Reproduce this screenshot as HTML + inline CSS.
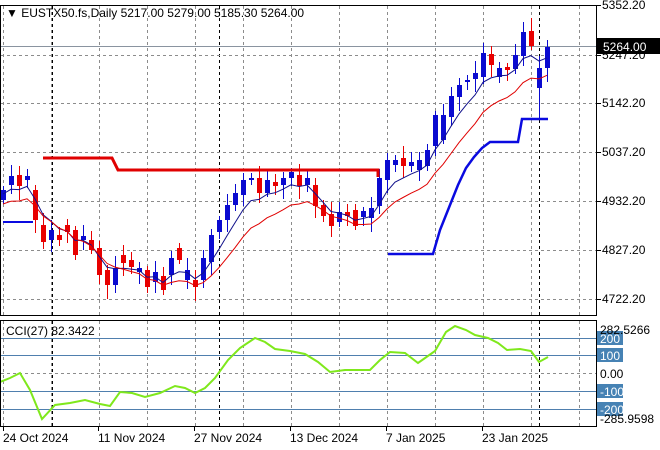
<!DOCTYPE html>
<html><head><meta charset="utf-8"><style>
body{margin:0;background:#fff;width:660px;height:450px;overflow:hidden}
svg{display:block;font-family:"Liberation Sans","DejaVu Sans",sans-serif;font-size:12px}
</style></head><body>
<svg id="s" width="660" height="450" xmlns="http://www.w3.org/2000/svg">
<rect width="660" height="450" fill="#fff"/>
<g id="grid"></g>
<g id="plot"></g>
<rect x="0.5" y="5.5" width="596" height="310" fill="none" stroke="#000"/>
<rect x="0.5" y="320.5" width="596" height="106" fill="none" stroke="#000"/>
<g id="axis"></g>
<text x="6" y="17" font-size="12">▼ EUSTX50.fs,Daily  5217.00 5279.00 5185.30 5264.00</text>
<text x="6" y="335" font-size="12">CCI(27) 82.3422</text>
</svg>
<script>
var NS="http://www.w3.org/2000/svg";
function el(p,t,a,txt){var e=document.createElementNS(NS,t);for(var k in a)e.setAttribute(k,a[k]);if(txt!=null)e.textContent=txt;document.getElementById(p).appendChild(e);return e;}
var G="grid";
[3,51,99,147,195,243,291,339,387,435,483,531,579].forEach(function(x){
 el(G,"line",{x1:x+.5,y1:6,x2:x+.5,y2:315,stroke:"#8c8c8c","stroke-dasharray":"3,3"});
 el(G,"line",{x1:x+.5,y1:321,x2:x+.5,y2:426,stroke:"#8c8c8c","stroke-dasharray":"3,3"});
});
[52,219,539].forEach(function(x){
 el(G,"line",{x1:x+.5,y1:6,x2:x+.5,y2:315,stroke:"#000","stroke-dasharray":"3,3"});
 el(G,"line",{x1:x+.5,y1:321,x2:x+.5,y2:426,stroke:"#000","stroke-dasharray":"3,3"});
});
[55,103,152,201,250,299].forEach(function(y){el(G,"line",{x1:1,y1:y+.5,x2:596,y2:y+.5,stroke:"#8c8c8c","stroke-dasharray":"3,3"});});
el(G,"line",{x1:1,y1:46.5,x2:596,y2:46.5,stroke:"#8a94a0"});
[338,355,391,409].forEach(function(y){el(G,"line",{x1:1,y1:y+.5,x2:596,y2:y+.5,stroke:"#4f7fae"});});
el(G,"line",{x1:1,y1:373.5,x2:596,y2:373.5,stroke:"#8c8c8c","stroke-dasharray":"3,3"});
// candles [open,close] in y
var oc=[[200,190],[185,176],[175,186],[180,176],[190,220],[225,242],[240,230],[235,240],[225,232],[230,255],[240,236],[240,250],[248,275],[270,285],[285,268],[255,263],[260,267],[272,268],[270,287],[282,272],[276,290],[275,258],[248,260],[280,270],[280,287],[280,258],[262,235],[232,220],[220,205],[205,193],[195,180],[180,178],[178,193],[193,180],[182,186],[185,178],[178,172],[175,186],[185,178],[185,206],[205,216],[214,226],[222,212],[212,216],[210,226],[217,211],[218,208],[206,178],[180,160],[165,160],[158,166],[166,162],[170,160],[166,150],[146,115],[140,115],[117,96],[97,85],[82,80],[79,73],[77,53],[54,65],[77,68],[67,70],[69,55],[56,32],[31,46],[88,68],[68,47]];
var P="plot";
var closes=[];
oc.forEach(function(c,i){
 var x=3+8*i,o=c[0],cl=c[1],up=cl<o,col=up?"#0a0ad0":"#e80000";
 var t=Math.min(o,cl),b=Math.max(o,cl);
 var hi=t-4-((i*7)%9),lo=b+4+((i*5)%11);
 if(i==67){lo=118;hi=56}if(i==65)hi=22;if(i==66)hi=18;if(i==68)hi=40;
 el(P,"line",{x1:x+.5,y1:hi,x2:x+.5,y2:lo,stroke:col});
 el(P,"rect",{x:x-2,y:t,width:5,height:Math.max(b-t,1.5),fill:col});
 closes.push(cl);
});
function ema(a,n,off){var k=2/(n+1),v=a[0],r=[];a.forEach(function(z){v=v+k*(z-v);r.push(v+off)});return r;}
var b=ema(closes,5,4),r=ema(closes,9,14);
function pl(arr,col,w){var s=arr.map(function(y,i){return (3+8*i)+","+y.toFixed(1)}).join(" ");el(P,"polyline",{points:s,fill:"none",stroke:col,"stroke-width":w});}
pl(b,"#10108a",1);pl(r,"#e00000",1);
el(P,"polyline",{points:"43,158 112,158 118,170 378,170 378,177",fill:"none",stroke:"#e00000","stroke-width":3});
el(P,"polyline",{points:"388,254 433,254 440,230 450,205 458,185 466,168 474,157 482,148 490,142 518,142 522,119 548,119",fill:"none",stroke:"#0a0ae0","stroke-width":2.5});
el(P,"polyline",{points:"3,222 33,222",fill:"none",stroke:"#0a0ae0","stroke-width":2});
el(P,"polyline",{points:"0,382 10,378 20,373 30,390 42,419 55,405 70,403 85,400 100,404 110,406 120,392 132,393 145,397 160,393 175,386 185,388 195,393 205,388 215,378 228,360 240,348 255,338 265,342 275,349 290,351 305,354 318,362 330,372 345,370 370,370 380,360 390,352 405,353 418,363 435,351 446,332 455,326 466,330 475,335 488,338 498,343 507,350 520,349 531,351 539,362 548,357",fill:"none",stroke:"#7fe81c","stroke-width":2});
var A="axis";
[[5352.2,5],[5247.2,55],[5142.2,103],[5037.2,152],[4932.2,201],[4827.2,250],[4722.2,299]].forEach(function(v){
 el(A,"line",{x1:597,y1:v[1]+.5,x2:601,y2:v[1]+.5,stroke:"#000"});
 el(A,"text",{x:602,y:v[1]+4},v[0].toFixed(2));});
el(A,"rect",{x:597,y:38,width:63,height:16,fill:"#000"});
el(A,"text",{x:603,y:51,fill:"#fff"},"5264.00");
[["200",338],["100",355],["-100",391],["-200",409]].forEach(function(v){
 el(A,"rect",{x:597,y:v[1]-7,width:26,height:14,fill:"#4682b4"});
 el(A,"text",{x:600,y:v[1]+5,fill:"#fff"},v[0]);});
el(A,"text",{x:600,y:334},"282.5266");
el(A,"text",{x:600,y:378},"0.00");
el(A,"text",{x:600,y:423},"-285.9598");
[["24 Oct 2024",3],["11 Nov 2024",98],["27 Nov 2024",194],["13 Dec 2024",290],["7 Jan 2025",386],["23 Jan 2025",482]].forEach(function(v){
 el(A,"line",{x1:v[1]+.5,y1:427,x2:v[1]+.5,y2:431,stroke:"#000"});
 el(A,"text",{x:v[1],y:442},v[0]);});
</script>
</body></html>
